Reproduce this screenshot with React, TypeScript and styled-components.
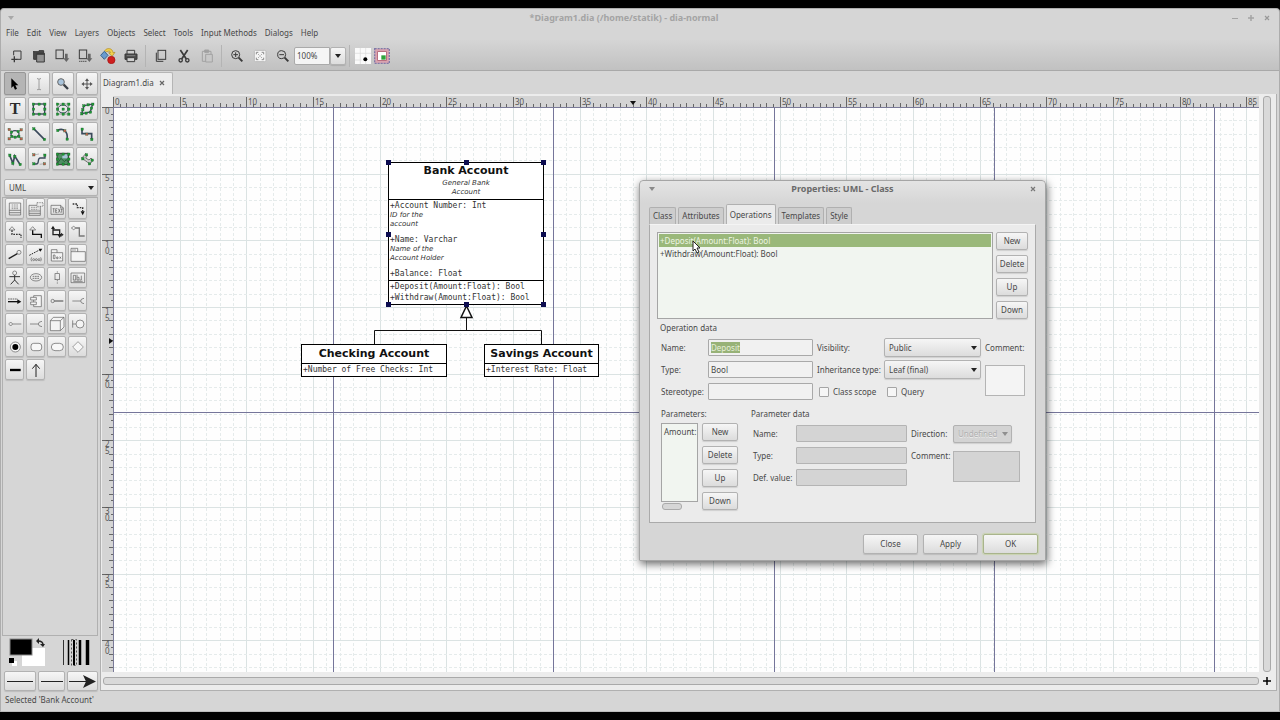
import React, { useEffect, useRef, useState } from "react";
import styled, { createGlobalStyle, css } from "styled-components";

const GlobalStyle = createGlobalStyle`
  *, *::before, *::after { box-sizing: border-box; }
  body {
    margin: 0;
    background: #000;
    color: #484848;
    font: 8px/12px "Noto Sans", "Open Sans", sans-serif;
  }
  button, input, select, textarea { font: inherit; color: inherit; margin: 0; }
  ul { list-style: none; margin: 0; padding: 0; }
`;

/* ---------- shared surfaces ---------- */

const raised = css`
  border: 1px solid #b2b2b2;
  border-radius: 2px;
  background: linear-gradient(#f6f6f6, #dcdcdc);
  box-shadow: 0 1px 1px rgba(0, 0, 0, 0.12);
`;

const Desktop = styled.div`
  min-height: 100vh;
  padding: 8px 0;
  display: flex;
  flex-direction: column;
  background: #000;
`;

const AppWindow = styled.div`
  position: relative;
  flex: 1;
  display: flex;
  flex-direction: column;
  border: 1px solid #adadad;
  border-bottom-color: #bcbcbc;
  border-radius: 4px 4px 0 0;
  background: #d6d6d6;
`;

const TitleBar = styled.header`
  display: grid;
  grid-template-columns: 64px 1fr 96px;
  align-items: center;
  height: 17px;
  padding: 0 7px;
  color: #a4a4a4;
`;

const Title = styled.h1`
  margin: 0;
  font-size: 9px;
  font-weight: 700;
  text-align: center;
`;

const WindowButtons = styled.div`
  display: flex;
  justify-content: flex-end;
  gap: 6px;
`;

const FlatButton = styled.button`
  display: flex;
  align-items: center;
  justify-content: center;
  width: 10px;
  height: 12px;
  padding: 0;
  border: 0;
  background: none;
`;

const MenuBar = styled.nav`
  display: flex;
  height: 14px;
  padding: 0 1px;
`;

const MenuButton = styled.button`
  padding: 0 4px;
  border: 0;
  background: none;
  line-height: 12px;
`;

const ToolBar = styled.div`
  display: flex;
  align-items: center;
  height: 31px;
  padding: 1px 3px 0;
  border-bottom: 1px solid #a9a9a9;
  background: linear-gradient(#d5d5d5, #c1c1c1);
`;

const ToolBarButton = styled.button`
  display: flex;
  align-items: center;
  justify-content: center;
  width: 23px;
  height: 24px;
  padding: 0;
  border: 0;
  background: none;
`;

const SnapButton = styled(ToolBarButton)`
  width: 19px;
`;

const Separator = styled.span`
  width: 1px;
  height: 22px;
  margin: 0 3px;
  background: #b4b4b4;
`;

const ZoomBox = styled.div`
  display: flex;
`;

const ZoomInput = styled.input`
  width: 36px;
  height: 18px;
  padding: 0 2px;
  border: 1px solid #aaa;
  border-radius: 2px 0 0 2px;
  background: #f5f5f5;
`;

const ZoomDrop = styled.button`
  ${raised}
  display: flex;
  align-items: center;
  justify-content: center;
  width: 16px;
  height: 18px;
  padding: 0;
`;

/* ---------- body ---------- */

const Body = styled.div`
  flex: 1;
  display: flex;
  min-height: 0;
`;

const Dock = styled.aside`
  display: flex;
  flex-direction: column;
  flex: none;
  width: 98px;
  padding: 1px 1px 0 3px;
`;

const ToolGrid = styled.div`
  display: grid;
  grid-template-columns: repeat(4, 22px);
  gap: 2px;
  margin-bottom: 9px;
`;

const ToolButton = styled.button<{ $active?: boolean }>`
  ${raised}
  display: flex;
  align-items: center;
  justify-content: center;
  height: 23px;
  padding: 0;
  ${(p) => p.$active && css`background: #b5b5b5; border-color: #979797;`}
`;

const TextGlyph = styled.span`
  font: 700 16px/20px "Liberation Serif", serif;
  color: #2c2c2c;
`;

const SelectFrame = styled.div<{ $disabled?: boolean }>`
  position: relative;
  display: flex;
  &::after {
    content: "";
    position: absolute;
    right: 4px;
    top: 50%;
    margin-top: -2px;
    border: 3px solid transparent;
    border-top: 4px solid ${(p) => (p.$disabled ? "#8f8f8f" : "#222")};
    border-bottom: 0;
    pointer-events: none;
  }
`;

const Select = styled.select<{ $height: number }>`
  ${raised}
  appearance: none;
  flex: 1;
  min-width: 0;
  height: ${(p) => p.$height}px;
  padding: 0 4px;
  &:disabled {
    background: #d3d3d3;
    color: #b0b0b0;
    opacity: 1;
    text-shadow: 0 1px 0 #ececec;
  }
`;

const Sheet = styled.div`
  flex: 1;
  display: grid;
  grid-template-columns: repeat(4, 19px);
  grid-auto-rows: 21px;
  align-content: start;
  gap: 2px;
  margin: 1px 0 0 -2px;
  padding: 0 2px;
  border: 1px solid #b0b0b0;
`;

const SheetButton = styled.button`
  ${raised}
  display: flex;
  align-items: center;
  justify-content: center;
  padding: 0;
`;

const StyleRow = styled.div`
  display: flex;
  justify-content: space-between;
  height: 35px;
  padding: 2px 8px 0 4px;
`;

const LineRow = styled.div`
  display: grid;
  grid-template-columns: 32px 27px 31px;
  gap: 2px;
`;

const LineButton = styled(ToolButton)`
  height: 20px;
`;

const Workspace = styled.main`
  flex: 1;
  display: flex;
  flex-direction: column;
  min-width: 0;
  padding: 1px 2px 0 1px;
`;

const TabRow = styled.div`
  display: flex;
  height: 22px;
`;

const DocumentTab = styled.div`
  display: flex;
  align-items: center;
  justify-content: space-between;
  width: 73px;
  padding: 0 5px 1px 2px;
  border: 1px solid #b5b5b5;
  border-bottom: 0;
  border-radius: 2px 2px 0 0;
  background: #ececec;
`;

const Notebook = styled.section`
  flex: 1;
  display: grid;
  grid-template: 11px 1fr 18px / 11px minmax(0, 1fr) 17px;
  padding: 2px 0 0 1px;
  border: 1px solid #b0b0b0;
  border-top: 0;
  background: #ececec;
`;

const RulerX = styled.svg`
  grid-area: 1 / 2;
  width: 100%;
  height: 11px;
  background: #d4d4d4;
`;

const RulerYBox = styled.div`
  grid-area: 2 / 1;
  position: relative;
  overflow: hidden;
  background: #d4d4d4;
`;

const LayerSvg = styled.svg`
  position: absolute;
  left: 0;
  top: 0;
  width: 100%;
  height: 100%;
`;

const Canvas = styled.div`
  grid-area: 2 / 2;
  position: relative;
  overflow: hidden;
  background: #fefefe;
  border: solid #7a7a98;
  border-width: 1px 0 0 1px;
`;

const ScrollColumn = styled.div`
  grid-area: 1 / 3 / 3 / 4;
  padding: 0 5px 0 4px;
  display: flex;
`;

const ScrollRow = styled.div`
  grid-area: 3 / 1 / 4 / 3;
  padding: 5px 0 5px 1px;
  display: flex;
`;

const Thumb = styled.div`
  flex: 1;
  border: 1px solid #a9a9a9;
  border-radius: 3px;
  background: #d9d9d9;
`;

const NavigateButton = styled(FlatButton)`
  grid-area: 3 / 3;
  justify-self: start;
  align-self: center;
  margin-left: 3px;
`;

const StatusBar = styled.footer`
  height: 20px;
  padding: 3px 4px;
`;

/* ---------- UML nodes ---------- */

const Node = styled.article<{ $x: number; $y: number; $w: number }>`
  position: absolute;
  left: ${(p) => p.$x}px;
  top: ${(p) => p.$y}px;
  width: ${(p) => p.$w}px;
  border: 1px solid #000;
  background: #fff;
  color: #333;
  white-space: nowrap;
`;

const NodeHead = styled.div<{ $single?: boolean }>`
  padding: ${(p) => (p.$single ? "1px 0" : "0 0 2px")};
  text-align: center;
`;

const NodeName = styled.h2`
  margin: 0;
  font: 700 11px/16px "DejaVu Sans", sans-serif;
  color: #111;
`;

const NodeNote = styled.p`
  margin: 0;
  font: italic 7px/9px "DejaVu Sans", sans-serif;
`;

const NodeSection = styled.div`
  border-top: 1px solid #000;
  padding: 0 1px 1px;
`;

const Member = styled.div`
  font: 8px/11px "DejaVu Sans Mono", monospace;
  ${NodeNote} + & { margin-top: 5px; }
`;

const Handle = styled.span<{ $x: number; $y: number }>`
  position: absolute;
  left: ${(p) => p.$x}px;
  top: ${(p) => p.$y}px;
  width: 5px;
  height: 5px;
  background: #0c0c50;
`;

/* ---------- properties dialog ---------- */

const Dialog = styled.section`
  position: absolute;
  left: 638px;
  top: 171px;
  width: 407px;
  padding: 0 7px 6px 9px;
  border: 1px solid #a5a5a5;
  border-radius: 4px 4px 0 0;
  background: linear-gradient(#e4e4e4, #d6d6d6 22px);
  box-shadow: 1px 3px 9px rgba(0, 0, 0, 0.6);
`;

const DialogTitleBar = styled.header`
  display: grid;
  grid-template-columns: 8px 1fr 10px;
  align-items: center;
  height: 16px;
  color: #6a6a6a;
`;

const DialogTabs = styled.div`
  display: flex;
  align-items: flex-end;
  gap: 2px;
  height: 27px;
`;

const DialogTab = styled.button<{ $active?: boolean }>`
  height: ${(p) => (p.$active ? 20 : 17)}px;
  padding: 0 3px;
  border: 1px solid #b0b0b0;
  border-bottom: 0;
  border-radius: 2px 2px 0 0;
  background: ${(p) => (p.$active ? "#ebebeb" : "#cdcdcd")};
`;

const DialogPage = styled.div`
  display: flex;
  flex-direction: column;
  width: 387px;
  height: 299px;
  padding: 7px;
  border: 1px solid #aaa;
  border-top-color: #f4f4f4;
  background: #ebebeb;
`;

const ListRow = styled.div`
  display: flex;
  gap: 3px;
`;

const List = styled.ul`
  flex: 1;
  padding: 1px;
  border: 1px solid #a5a5a5;
  background: #f1f5f0;
`;

const Option = styled.li<{ $selected?: boolean }>`
  height: 13px;
  padding-left: 1px;
  line-height: 13px;
  ${(p) => p.$selected && css`background: #9ab87a; color: #eef5e4;`}
`;

const ButtonStack = styled.div<{ $width: number }>`
  display: grid;
  grid-auto-rows: 18px;
  gap: 5px;
  width: ${(p) => p.$width}px;
`;

const PushButton = styled.button<{ $default?: boolean }>`
  ${raised}
  padding: 0;
  ${(p) => p.$default && css`border-color: #a9b48c; box-shadow: 0 0 1px 1px #c9d3b0;`}
`;

const SectionLabel = styled.h3`
  margin: 0;
  font-size: 8px;
  font-weight: 400;
`;

const OperationHead = styled(SectionLabel)`
  margin-top: 3px;
  padding-left: 3px;
`;

const OperationForm = styled.div`
  display: grid;
  grid-template: repeat(3, 17px) / 43px 105px 63px 97px 40px;
  column-gap: 4px;
  row-gap: 5px;
  align-items: center;
  margin-top: 5px;
  margin-left: 4px;
`;

const CheckRow = styled.div`
  grid-column: 3 / 5;
  display: grid;
  grid-template-columns: 68px 1fr;
  padding-left: 2px;
`;

const CheckLabel = styled.label`
  display: flex;
  align-items: center;
  gap: 4px;
`;

const CheckBox = styled.input`
  appearance: none;
  width: 10px;
  height: 10px;
  border: 1px solid #a5a5a5;
  border-radius: 1px;
  background: #f6f6f6;
`;

const TextField = styled.input`
  width: 100%;
  height: 17px;
  padding: 0 2px;
  border: 1px solid #a9a9a9;
  border-radius: 1px;
  outline: 0;
  background: #f1f1f1;
  &::selection { background: #97b277; color: #e6efda; }
  &:disabled { background: #d4d4d4; border-color: #b4b4b4; }
`;

const TextBox = styled.textarea<{ $column: number }>`
  grid-area: 2 / ${(p) => p.$column} / 4;
  align-self: start;
  width: 100%;
  height: 31px;
  margin-top: 4px;
  padding: 1px;
  border: 1px solid #b4b4b4;
  outline: 0;
  resize: none;
  background: #f4f4f4;
  &:disabled { background: #d4d4d4; }
`;

const NoWrapLabel = styled.label`
  white-space: nowrap;
`;

const ParameterHeads = styled.div`
  display: grid;
  grid-template-columns: 90px 1fr;
  margin: 8px 0 3px;
  padding-left: 4px;
`;

const ParameterRow = styled.div`
  display: grid;
  grid-template-columns: 37px 36px 1fr;
  column-gap: 4px;
  padding-left: 4px;
`;

const ParameterPane = styled.div`
  display: flex;
  flex-direction: column;
  gap: 1px;
`;

const SmallThumb = styled.div`
  width: 20px;
  height: 7px;
  margin-left: 1px;
  border: 1px solid #aaa;
  border-radius: 3px;
  background: #d6d6d6;
`;

const ParameterForm = styled.div`
  display: grid;
  grid-template: repeat(3, 17px) / 39px 111px 38px 67px;
  column-gap: 4px;
  row-gap: 5px;
  align-items: center;
  padding: 2px 0 0 11px;
`;

const DirectionSelect = styled(SelectFrame)`
  width: 59px;
`;

const DialogActions = styled.footer`
  display: grid;
  grid-template-columns: repeat(3, 55px);
  grid-auto-rows: 20px;
  justify-content: end;
  gap: 5px;
  margin-top: 11px;
`;

const Pointer = styled.svg`
  position: absolute;
  left: 691px;
  top: 231px;
  width: 10px;
  height: 14px;
`;

/* ---------- icons: 48-unit grid shown at 16px ---------- */

const IconSvg = styled.svg`
  width: 16px;
  height: 16px;
  flex: none;
  fill: none;
  stroke: #3a3a3a;
  stroke-width: 3;
`;

const Icon = ({ children }: { children: React.ReactNode }) => (
  <IconSvg viewBox="0 0 48 48" aria-hidden="true">{children}</IconSvg>
);

type Pt = [number, number];
const Dots = ({ at, color = "#1f9a35" }: { at: Pt[]; color?: string }) => (
  <>
    {at.map(([x, y]) => (
      <rect key={`${x}-${y}`} x={x - 3} y={y - 3} width="7" height="7" fill={color} stroke="#1d5a2a" strokeWidth="1" />
    ))}
  </>
);
const RED = "#c4614f";
const frame: Pt[] = [[7, 9], [24, 9], [41, 9], [7, 24], [41, 24], [7, 39], [24, 39], [41, 39]];

const Triangle = ({ color }: { color: string }) => (
  <svg width="6" height="4" viewBox="0 0 6 4" aria-hidden="true"><path d="M0 0H6L3 4Z" fill={color} /></svg>
);
const Cross = ({ color = "#666" }: { color?: string }) => (
  <svg width="6" height="6" viewBox="0 0 6 6" aria-hidden="true"><path d="M1 1L5 5M5 1L1 5" stroke={color} strokeWidth="1.2" /></svg>
);

const magnifier = (sign: string) => (
  <Icon>
    <circle cx="20" cy="20" r="12" /><path d="M29 29L40 40" strokeWidth="6" /><path d={sign} />
  </Icon>
);

const saveArrow = <path d="M33 17H41V31H46L37 42L28 31H33Z" fill="#666" stroke="none" />;

const fileIcons: [string, React.ReactNode][] = [
  ["New", <Icon><path d="M17 22V9H39V34H27" /><path d="M19 25V43M10 34H28" strokeWidth="4" /></Icon>],
  ["Open", <Icon><path d="M8 9V34H16V16H38V8H24V11H8Z" fill="#4a4a4a" /><path d="M17 16H40V42H17Z" fill="#929292" /><path d="M17 18H41" strokeWidth="5" /></Icon>],
  ["Save", <Icon><rect x="6" y="6" width="22" height="26" />{saveArrow}</Icon>],
  ["Save As", <Icon><rect x="7" y="6" width="22" height="26" />{saveArrow}<path d="M7 40H29" strokeDasharray="3 3" strokeWidth="4" /></Icon>],
  ["Export", <Icon><path d="M13 10L24 22L13 34L2 22Z" fill="#6a9bd0" stroke="#3a668f" /><path d="M14 8C21 -2 38 0 39 14L45 13L36 25L26 14L32 14C31 8 24 8 21 12Z" fill="#f0d04c" stroke="#b08a20" strokeWidth="2" /><circle cx="34" cy="36" r="11" fill="#cf1f1f" stroke="#a01010" strokeWidth="2" /></Icon>],
  ["Print", <Icon><path d="M12 18V7H35V18" /><path d="M6 18H42V34H6Z" fill="#4a4a4a" /><path d="M12 29H35V41H12Z" fill="#d0d0d0" /><path d="M11 23H37" stroke="#999" strokeWidth="2" /></Icon>],
];
const editIcons: [string, React.ReactNode][] = [
  ["Copy", <Icon><rect x="15" y="7" width="23" height="27" /><path d="M10 14V40H31" /></Icon>],
  ["Cut", <Icon><path d="M13 6L31 33M35 6L17 33" strokeWidth="5" /><circle cx="14" cy="37" r="5" strokeWidth="4" /><circle cx="34" cy="37" r="5" strokeWidth="4" /></Icon>],
  ["Paste", <Icon><g stroke="#a2a2a2"><path d="M10 10H36V40H10Z" /><path d="M17 6H29V13H17Z" fill="#a2a2a2" /><path d="M20 19H40V42H20Z" fill="#c8c8c8" /></g></Icon>],
];
const zoomIcons: [string, React.ReactNode][] = [
  ["Zoom In", magnifier("M20 13V27M13 20H27")],
  ["Zoom Fit", <Icon><rect x="7" y="7" width="35" height="34" rx="4" fill="#f4f4f4" stroke="#bbb" /><path d="M13 19V13H19M29 13H35V19M35 29V35H29M19 35H13V29M19 19L22 22M29 19L26 22M19 29L22 26M29 29L26 26" stroke="#8a8a8a" /></Icon>],
  ["Zoom Out", magnifier("M13 20H27")],
];

const tools: [string, React.ReactNode][] = [
  ["Modify", <Icon><path d="M13 7V36L19 30L24 41L30 38L25 28H34Z" fill="#000" stroke="none" /></Icon>],
  ["Text edit", <Icon><path d="M24 9V40M18 8H22L24 10L26 8H30M18 41H22L24 39L26 41H30" stroke="#777" strokeWidth="2" /></Icon>],
  ["Magnify", <Icon><circle cx="18" cy="18" r="10" fill="#a9c4dc" stroke="#666" /><path d="M26 26L39 39" strokeWidth="7" stroke="#3a4048" /></Icon>],
  ["Scroll", <Icon><path d="M24 12V36M12 24H36" stroke="#555" /><path d="M24 7L30 15H18ZM24 41L30 33H18ZM7 24L15 18V30ZM41 24L33 18V30Z" fill="#555" stroke="none" /></Icon>],
  ["Text", <TextGlyph>T</TextGlyph>],
  ["Box", <Icon><rect x="7" y="9" width="34" height="30" stroke="#3b4a5c" strokeWidth="4" /><Dots at={frame} /></Icon>],
  ["Ellipse", <Icon><ellipse cx="24" cy="24" rx="15" ry="12" stroke="#3b4a5c" /><path d="M7 9H41V39H7Z" stroke="#5c7a62" strokeWidth="2" /><Dots at={[...frame, [24, 24]]} /></Icon>],
  ["Polygon", <Icon><path d="M15 14L41 9L34 33L8 38Z" stroke="#3b4a5c" strokeWidth="4" /><Dots at={[[14, 14], [27, 11], [41, 9], [37, 21], [34, 33], [21, 36], [8, 38], [11, 26]]} /></Icon>],
  ["Beziergon", <Icon><path d="M7 10L16 16M41 12L34 16M7 38L14 31M42 38L34 31" stroke="#888" strokeWidth="2" /><ellipse cx="24" cy="24" rx="12" ry="10" stroke="#3b4a5c" strokeWidth="4" /><Dots at={[[13, 18], [33, 16], [14, 31], [35, 31], [24, 33]]} /><Dots color={RED} at={[[6, 10], [42, 11], [6, 38], [42, 38]]} /></Icon>],
  ["Line", <Icon><path d="M8 8L40 40" stroke="#3b4a5c" strokeWidth="5" /><Dots at={[[8, 8], [40, 40]]} /></Icon>],
  ["Arc", <Icon><path d="M8 13C24 5 40 16 36 39" stroke="#3b4a5c" strokeWidth="5" /><Dots at={[[8, 13], [36, 39]]} /><Dots color={RED} at={[[29, 14]]} /></Icon>],
  ["Zigzag", <Icon><path d="M9 9V23H38V40" stroke="#3b4a5c" strokeWidth="5" /><Dots at={[[9, 9], [38, 40]]} /><Dots color={RED} at={[[23, 24]]} /></Icon>],
  ["Polyline", <Icon><path d="M8 13L18 37L23 15L39 40" stroke="#3b4a5c" strokeWidth="5" /><Dots at={[[8, 12], [17, 36], [23, 16], [39, 40]]} /></Icon>],
  ["Bezierline", <Icon><path d="M8 12L24 9M40 38L26 40" stroke="#999" strokeWidth="2" /><path d="M8 39H16C27 39 17 21 28 21H42V13" stroke="#3b4a5c" strokeWidth="4" /><Dots at={[[8, 38], [41, 12]]} /><Dots color={RED} at={[[8, 11], [40, 38]]} /></Icon>],
  ["Image", <Icon><path d="M6 7H41V41H6Z" fill="#4f8f63" /><path d="M22 10H38V22H22Z" fill="#a8c6d8" stroke="none" /><path d="M8 36L18 22L28 32L34 26L40 34" stroke="#285c38" /><Dots at={frame} /></Icon>],
  ["Outline", <Icon><path d="M8 22L20 8L25 14L20 21L30 27L36 21L42 28L32 40L26 34L13 25Z" stroke="#777" strokeWidth="3" fill="#ccc" /><Dots at={[[11, 23], [22, 11], [39, 27], [31, 38]]} /></Icon>],
];

const thin = { stroke: "#5a5a5a", strokeWidth: 2 };
const sheetIcons: [string, React.ReactNode][] = [
  ["Class", <Icon><path d="M7 6H41V42H7ZM7 28H41M7 35H41" {...thin} /><path d="M14 12H34M14 18H34M14 23H34" stroke="#999" strokeDasharray="5 2" /></Icon>],
  ["Template class", <Icon><path d="M3 13H37V43H3ZM3 30H37M3 37H37" {...thin} /><path d="M9 19H31M9 25H31" stroke="#999" strokeDasharray="5 2" /><path d="M27 5H45V16H27Z" fill="#eee" {...thin} strokeDasharray="3 2" /></Icon>],
  ["Note", <Icon><path d="M6 13H35L43 21V40H6ZM35 13V21H43" {...thin} /><path d="M11 23H17M14 23V35M20 23V35H25M20 23H25M20 29H24M28 23L34 35M34 23L28 35M36 25H41M38 25V35" {...thin} /></Icon>],
  ["Dependency", <Icon><path d="M8 9H22V20H38V30" strokeWidth="4" strokeDasharray="5 3" stroke="#333" /><path d="M32 31H44L38 43Z" fill="#111" stroke="none" /></Icon>],
  ["Realizes", <Icon><path d="M15 8L24 18H6Z" {...thin} /><path d="M15 19V31H42V42" strokeDasharray="5 3" strokeWidth="4" stroke="#333" /></Icon>],
  ["Generalization", <Icon><path d="M14 8L23 18H5Z" {...thin} /><path d="M14 19V31H40V42" strokeWidth="4" stroke="#111" /></Icon>],
  ["Association", <Icon><path d="M12 9V32H38M12 18H32V38" strokeWidth="4" stroke="#222" /><path d="M6 15L12 5L18 15ZM26 32L32 42L38 32ZM36 26L44 32L36 38Z" fill="#222" stroke="none" /></Icon>],
  ["Aggregation", <Icon><path d="M4 12L11 7L18 12L11 17Z" {...thin} /><path d="M18 12H28V36H44" stroke="#777" strokeWidth="4" /></Icon>],
  ["Implements", <Icon><path d="M5 35L31 20" stroke="#222" strokeWidth="4" /><circle cx="36" cy="16" r="6" {...thin} /></Icon>],
  ["Constraint", <Icon><path d="M4 25L36 8" stroke="#222" strokeDasharray="5 3" /><path d="M32 5H43L37 14Z" fill="#111" stroke="none" /><path d="M11 31Q7 37 11 43M38 31Q42 37 38 43" {...thin} /><circle cx="17" cy="38" r="3" {...thin} /><circle cx="25" cy="38" r="3" {...thin} /><circle cx="33" cy="38" r="3" {...thin} /></Icon>],
  ["Small package", <Icon><path d="M7 17H41V42H7ZM7 17V8H24V17" fill="#f4f4f4" {...thin} /><path d="M13 24V35H18V24ZM23 30H27V35H23ZM32 29L36 35M36 29L32 35" {...thin} /></Icon>],
  ["Large package", <Icon><path d="M3 14H46V43H3ZM3 14V4H23V14" fill="#f4f4f4" {...thin} /><path d="M7 9H19" stroke="#777" strokeDasharray="4 2" /></Icon>],
  ["Actor", <Icon><circle cx="23" cy="9" r="6" {...thin} /><path d="M23 15V30L11 43M23 30L35 43M7 20H39" stroke="#333" /></Icon>],
  ["Use case", <Icon><ellipse cx="24" cy="22" rx="17" ry="11" {...thin} /><path d="M14 19H34M14 25H34" stroke="#777" strokeDasharray="5 2" /></Icon>],
  ["Lifeline", <Icon><rect x="18" y="11" width="13" height="18" {...thin} /><path d="M25 4V11M25 30V44" {...thin} strokeDasharray="4 3" /></Icon>],
  ["Object", <Icon><path d="M3 9H44V38H3Z" {...thin} /><path d="M10 16H17V30H10ZM21 14V30H27V22H22M34 17V30H29M10 34H38" {...thin} /></Icon>],
  ["Message", <Icon><path d="M3 18H32" stroke="#666" strokeDasharray="5 2" /><path d="M3 26H34" stroke="#111" strokeWidth="4" /><path d="M31 19L43 26L31 33Z" fill="#111" stroke="none" /></Icon>],
  ["Component", <Icon><path d="M17 8H40V41H17Z" fill="#f4f4f4" {...thin} /><path d="M8 13H25V21H8ZM8 27H25V35H8Z" fill="#f4f4f4" {...thin} /></Icon>],
  ["Provided interface", <Icon><circle cx="11" cy="24" r="5" {...thin} /><path d="M16 24H43" stroke="#444" /></Icon>],
  ["Required interface", <Icon><path d="M7 24H32M42 16Q32 17 32 24Q32 31 42 32" {...thin} /></Icon>],
  ["Port", <Icon><path d="M5 24L11 18L17 24L11 30Z" {...thin} /><path d="M17 24H43" {...thin} /></Icon>],
  ["Socket", <Icon><path d="M6 24H31M42 16Q31 17 31 24Q31 31 42 32" {...thin} /></Icon>],
  ["Node", <Icon><path d="M4 14H34V44H4ZM4 14L13 4H45V33L34 44M34 14L45 4" fill="#f4f4f4" {...thin} /></Icon>],
  ["Control class", <Icon><circle cx="30" cy="24" r="12" fill="#f4f4f4" {...thin} /><path d="M8 13V35M8 24H18" {...thin} /></Icon>],
  ["Final state", <Icon><circle cx="25" cy="24" r="15" fill="#f7f7f7" {...thin} /><circle cx="25" cy="24" r="9" fill="#000" stroke="none" /></Icon>],
  ["State", <Icon><rect x="9" y="13" width="32" height="22" rx="8" fill="#f7f7f7" {...thin} /></Icon>],
  ["Activity", <Icon><rect x="7" y="13" width="36" height="22" rx="11" fill="#f7f7f7" {...thin} /></Icon>],
  ["Branch", <Icon><path d="M24 8L40 24L24 40L8 24Z" fill="#f7f7f7" stroke="#777" strokeWidth="2" /></Icon>],
  ["Fork", <Icon><path d="M9 24H41" strokeWidth="7" stroke="#000" /></Icon>],
  ["Transition", <Icon><path d="M24 7V45M13 20L24 7L35 20" stroke="#222" /></Icon>],
];

/* ---------- diagram ---------- */

/* One diagram unit at 100% zoom, and the size of a printed page. */
const UNIT = 40 / 3;
const PAGE = { width: 220.2, height: 305 };
const at = (n: number) => Math.round(n * UNIT);
const upTo = (length: number, step = UNIT) =>
  Array.from({ length: Math.max(0, Math.ceil(length / step)) }, (_, i) => i);

/* Space left for the canvas by the dock, the rulers and the scroll bars. */
const canvasSize = () => ({ width: window.innerWidth - 133, height: window.innerHeight - 156 });

const useCanvasSize = () => {
  const [size, setSize] = useState(canvasSize);
  useEffect(() => {
    const update = () => setSize(canvasSize());
    window.addEventListener("resize", update);
    return () => window.removeEventListener("resize", update);
  }, []);
  return size;
};

const HorizontalRuler = ({ length }: { length: number }) => (
  <RulerX aria-hidden="true">
    {upTo(length).map((n) => (
      <g key={n} stroke="#666">
        <path d={`M${at(n)}.5 ${n % 5 ? 7 : 1}V11M${at(n + 0.5)}.5 8V11`} />
        {n % 5 === 0 && <text x={at(n) + 2} y="9" fontSize="8" fill="#555" stroke="none">{n}</text>}
      </g>
    ))}
    <path d="M517 5H523L520 9Z" fill="#111" />
  </RulerX>
);

const VerticalRuler = ({ length }: { length: number }) => (
  <RulerYBox>
    <LayerSvg aria-hidden="true">
      {upTo(length).map((n) => (
        <g key={n} stroke="#666">
          <path d={`M${n % 5 ? 7 : 0} ${at(n)}.5H11M9 ${at(n + 0.5)}.5H11`} />
          {n % 5 === 0 && (
            <text y={at(n)} fontSize="8" fill="#555" stroke="none">
              {String(n).split("").map((digit, i) => <tspan key={i} x="3" dy="7">{digit}</tspan>)}
            </text>
          )}
        </g>
      ))}
      <path d="M7 231V237L11 234Z" fill="#111" />
    </LayerSvg>
  </RulerYBox>
);

const lineLook = (n: number) => (n % 5 ? { stroke: "#e5ebeb", strokeDasharray: "3 2" } : { stroke: "#dbe3e3" });

const Grid = ({ width, height }: { width: number; height: number }) => (
  <LayerSvg aria-hidden="true">
    {upTo(width).slice(1).map((n) => <path key={`c${n}`} d={`M${at(n) - 1}.5 0V${height}`} {...lineLook(n)} />)}
    {upTo(height).slice(1).map((n) => <path key={`r${n}`} d={`M0 ${at(n) - 1}.5H${width}`} {...lineLook(n)} />)}
    {upTo(width, PAGE.width).slice(1).map((n) => (
      <path key={`p${n}`} d={`M${Math.round(n * PAGE.width) - 1}.5 0V${height}`} stroke="#75759a" />
    ))}
    {upTo(height, PAGE.height).slice(1).map((n) => (
      <path key={`q${n}`} d={`M0 ${n * PAGE.height - 1}.5H${width}`} stroke="#75759a" />
    ))}
    <path d="M352.5 210V222M260.5 237V222.5H427.5V237" stroke="#111" fill="none" />
    <path d="M352.5 198L358 209.5H347Z" stroke="#111" strokeWidth="1.5" fill="#fff" />
  </LayerSvg>
);

const handles: Pt[] = [[-3, -3], [75, -3], [152, -3], [-3, 69], [152, 69], [-3, 139], [75, 139], [152, 139]];

const Diagram = ({ width, height }: { width: number; height: number }) => (
  <Canvas>
    <Grid width={width} height={height} />
    <Node $x={274} $y={54} $w={156}>
      <NodeHead>
        <NodeName>Bank Account</NodeName>
        <NodeNote>General Bank</NodeNote>
        <NodeNote>Account</NodeNote>
      </NodeHead>
      <NodeSection>
        <Member>+Account Number: Int</Member>
        <NodeNote>ID for the</NodeNote>
        <NodeNote>account</NodeNote>
        <Member>+Name: Varchar</Member>
        <NodeNote>Name of the</NodeNote>
        <NodeNote>Account Holder</NodeNote>
        <Member>+Balance: Float</Member>
      </NodeSection>
      <NodeSection>
        <Member>+Deposit(Amount:Float): Bool</Member>
        <Member>+Withdraw(Amount:Float): Bool</Member>
      </NodeSection>
      {handles.map(([x, y]) => <Handle key={`${x}/${y}`} $x={x} $y={y} />)}
    </Node>
    <Node $x={187} $y={236} $w={146}>
      <NodeHead $single><NodeName>Checking Account</NodeName></NodeHead>
      <NodeSection><Member>+Number of Free Checks: Int</Member></NodeSection>
    </Node>
    <Node $x={370} $y={236} $w={115}>
      <NodeHead $single><NodeName>Savings Account</NodeName></NodeHead>
      <NodeSection><Member>+Interest Rate: Float</Member></NodeSection>
    </Node>
  </Canvas>
);

const listActions = ["New", "Delete", "Up", "Down"];

const PropertiesDialog = () => {
  const nameRef = useRef<HTMLInputElement>(null);
  useEffect(() => {
    nameRef.current?.focus();
    nameRef.current?.select();
  }, []);
  return (
    <Dialog role="dialog" aria-label="Properties: UML - Class">
      <DialogTitleBar>
        <Triangle color="#8a8a8a" />
        <Title as="h2">Properties: UML - Class</Title>
        <FlatButton aria-label="Close dialog"><Cross color="#777" /></FlatButton>
      </DialogTitleBar>
      <DialogTabs role="tablist">
        {["Class", "Attributes", "Operations", "Templates", "Style"].map((t) => (
          <DialogTab key={t} role="tab" aria-selected={t === "Operations"} $active={t === "Operations"}>{t}</DialogTab>
        ))}
      </DialogTabs>
      <DialogPage>
        <ListRow>
          <List role="listbox" aria-label="Operations">
            <Option role="option" aria-selected $selected>+Deposit(Amount:Float): Bool</Option>
            <Option role="option" aria-selected={false}>+Withdraw(Amount:Float): Bool</Option>
          </List>
          <ButtonStack $width={32}>
            {listActions.map((a) => <PushButton key={a}>{a}</PushButton>)}
          </ButtonStack>
        </ListRow>
        <OperationHead>Operation data</OperationHead>
        <OperationForm>
          <label htmlFor="op-name">Name:</label>
          <TextField id="op-name" ref={nameRef} defaultValue="Deposit" />
          <label htmlFor="op-vis">Visibility:</label>
          <SelectFrame><Select id="op-vis" $height={19}><option>Public</option></Select></SelectFrame>
          <label htmlFor="op-comment">Comment:</label>
          <label htmlFor="op-type">Type:</label>
          <TextField id="op-type" defaultValue="Bool" />
          <NoWrapLabel htmlFor="op-inh">Inheritance type:</NoWrapLabel>
          <SelectFrame><Select id="op-inh" $height={19}><option>Leaf (final)</option></Select></SelectFrame>
          <TextBox id="op-comment" $column={5} />
          <label htmlFor="op-stereo">Stereotype:</label>
          <TextField id="op-stereo" />
          <CheckRow>
            <CheckLabel><CheckBox type="checkbox" />Class scope</CheckLabel>
            <CheckLabel><CheckBox type="checkbox" />Query</CheckLabel>
          </CheckRow>
        </OperationForm>
        <ParameterHeads>
          <SectionLabel>Parameters:</SectionLabel>
          <SectionLabel>Parameter data</SectionLabel>
        </ParameterHeads>
        <ParameterRow>
          <ParameterPane>
            <List role="listbox" aria-label="Parameters">
              <Option role="option" aria-selected={false}>Amount:</Option>
            </List>
            <SmallThumb />
          </ParameterPane>
          <ButtonStack $width={36}>
            {listActions.map((a) => <PushButton key={a}>{a}</PushButton>)}
          </ButtonStack>
          <ParameterForm>
            <label htmlFor="p-name">Name:</label>
            <TextField id="p-name" disabled />
            <label htmlFor="p-dir">Direction:</label>
            <DirectionSelect $disabled><Select id="p-dir" $height={18} disabled><option>Undefined</option></Select></DirectionSelect>
            <label htmlFor="p-type">Type:</label>
            <TextField id="p-type" disabled />
            <label htmlFor="p-comment">Comment:</label>
            <TextBox id="p-comment" $column={4} disabled />
            <NoWrapLabel htmlFor="p-def">Def. value:</NoWrapLabel>
            <TextField id="p-def" disabled />
          </ParameterForm>
        </ParameterRow>
      </DialogPage>
      <DialogActions>
        <PushButton>Close</PushButton>
        <PushButton>Apply</PushButton>
        <PushButton $default>OK</PushButton>
      </DialogActions>
    </Dialog>
  );
};

const iconButtons = (items: [string, React.ReactNode][]) =>
  items.map(([name, icon]) => <ToolBarButton key={name} aria-label={name}>{icon}</ToolBarButton>);

export default function App() {
  const { width, height } = useCanvasSize();
  return (
    <Desktop>
      <GlobalStyle />
      <AppWindow>
        <TitleBar>
          <Triangle color="#a8a8a8" />
          <Title>*Diagram1.dia (/home/statik) - dia-normal</Title>
          <WindowButtons>
            <FlatButton aria-label="Minimize"><svg width="6" height="6"><path d="M0 3.5H6" stroke="#a4a4a4" /></svg></FlatButton>
            <FlatButton aria-label="Maximize"><svg width="6" height="6"><path d="M0 3H6M3 0V6" stroke="#a4a4a4" strokeWidth="1.5" /></svg></FlatButton>
            <FlatButton aria-label="Close"><Cross color="#999" /></FlatButton>
          </WindowButtons>
        </TitleBar>
        <MenuBar>
          {["File", "Edit", "View", "Layers", "Objects", "Select", "Tools", "Input Methods", "Dialogs", "Help"].map((m) => (
            <MenuButton key={m}>{m}</MenuButton>
          ))}
        </MenuBar>
        <ToolBar>
          {iconButtons(fileIcons)}
          <Separator />
          {iconButtons(editIcons)}
          <Separator />
          {iconButtons(zoomIcons)}
          <ZoomBox>
            <ZoomInput aria-label="Zoom" defaultValue="100%" />
            <ZoomDrop aria-label="Zoom levels"><Triangle color="#222" /></ZoomDrop>
          </ZoomBox>
          <Separator />
          <SnapButton aria-label="Snap to grid">
            <Icon><rect width="48" height="48" fill="#fafafa" stroke="none" /><path d="M16 0V48M0 16H48M32 0V16M32 16V48M0 36H20" stroke="#dadada" strokeWidth="2" /><circle cx="31" cy="34" r="6" fill="#000" stroke="none" /></Icon>
          </SnapButton>
          <SnapButton aria-label="Snap to objects">
            <Icon><rect x="2" y="2" width="44" height="44" fill="#d9a3b0" stroke="#7f7aa8" strokeWidth="4" strokeDasharray="6 3" /><rect x="11" y="11" width="26" height="26" fill="#fff" stroke="#a5475c" strokeWidth="2" /><rect x="22" y="22" width="13" height="13" fill="#2fa33c" stroke="none" /></Icon>
          </SnapButton>
        </ToolBar>
        <Body>
          <Dock>
            <ToolGrid>
              {tools.map(([name, icon], i) => <ToolButton key={name} aria-label={name} $active={i === 0}>{icon}</ToolButton>)}
            </ToolGrid>
            <SelectFrame><Select aria-label="Sheet" $height={17}><option>UML</option></Select></SelectFrame>
            <Sheet>
              {sheetIcons.map(([name, icon]) => <SheetButton key={name} aria-label={name}>{icon}</SheetButton>)}
            </Sheet>
            <StyleRow>
              <svg width="40" height="30" viewBox="0 0 40 30" aria-hidden="true">
                <rect x="14" y="10" width="23" height="18" fill="#fff" />
                <rect x="2" y="1" width="22" height="16" fill="#000" stroke="#888" />
                <path d="M30 3Q35 3 35 7" stroke="#222" strokeWidth="1.5" fill="none" />
                <path d="M31 0V6L28 3ZM32 6H37L35 9Z" fill="#222" />
                <rect x="4" y="23" width="5" height="5" fill="#fff" />
                <rect x="1" y="20" width="5" height="5" fill="#000" />
              </svg>
              <svg width="28" height="30" viewBox="0 0 28 30" aria-hidden="true">
                <path d="M1.5 2V27" stroke="#333" strokeWidth="1" />
                <path d="M6.5 2V27" stroke="#000" strokeWidth="1.5" />
                <path d="M12 2V27" stroke="#000" strokeWidth="2" />
                <path d="M18 2V27" stroke="#000" strokeWidth="2.5" />
                <path d="M25.5 2V27" stroke="#000" strokeWidth="3.5" />
                <rect x="9.5" y="1.5" width="5" height="26" fill="none" stroke="#555" strokeWidth="1" strokeDasharray="2 2" />
              </svg>
            </StyleRow>
            <LineRow>
              <LineButton aria-label="Line start"><svg width="26" height="14"><path d="M0 7.5H26" stroke="#222" /></svg></LineButton>
              <LineButton aria-label="Line style"><svg width="22" height="14"><path d="M0 7.5H22" stroke="#222" /></svg></LineButton>
              <LineButton aria-label="Line end"><svg width="27" height="14"><path d="M0 7.5H18" stroke="#222" /><path d="M14 1L27 7.5L14 14L17 7.5Z" fill="#222" /></svg></LineButton>
            </LineRow>
          </Dock>
          <Workspace>
            <TabRow>
              <DocumentTab>Diagram1.dia<FlatButton aria-label="Close tab"><Cross /></FlatButton></DocumentTab>
            </TabRow>
            <Notebook>
              <HorizontalRuler length={width} />
              <VerticalRuler length={height} />
              <Diagram width={width} height={height} />
              <ScrollColumn><Thumb /></ScrollColumn>
              <ScrollRow><Thumb /></ScrollRow>
              <NavigateButton aria-label="Navigate"><svg width="8" height="8"><path d="M0 4H8M4 0V8" stroke="#000" strokeWidth="1.5" /></svg></NavigateButton>
            </Notebook>
          </Workspace>
        </Body>
        <StatusBar>Selected 'Bank Account'</StatusBar>
        <PropertiesDialog />
        <Pointer viewBox="0 0 10 14" aria-hidden="true">
          <path d="M1 1V11L3 9L5 13L7 12L5 8H8Z" fill="#fff" stroke="#222" strokeWidth="1" />
        </Pointer>
      </AppWindow>
    </Desktop>
  );
}
